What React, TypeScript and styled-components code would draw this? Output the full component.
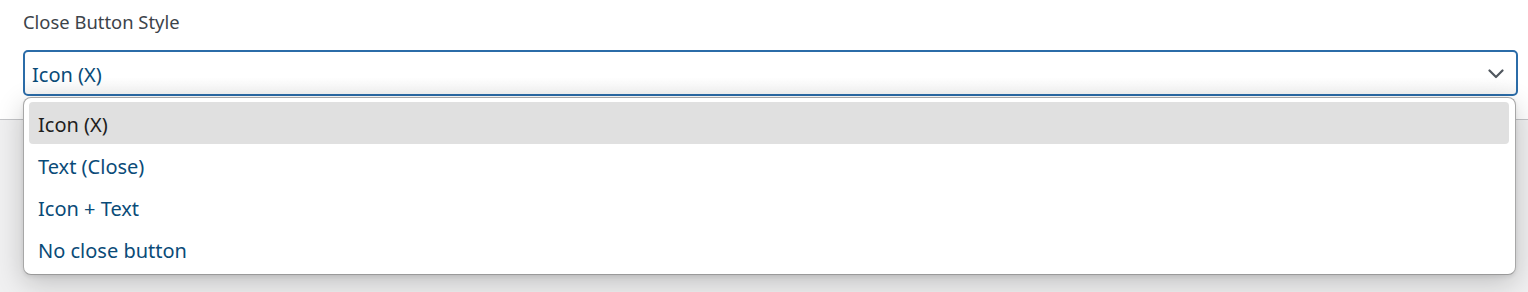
import React from "react";
import styled, { createGlobalStyle } from "styled-components";

const Global = createGlobalStyle`
  html, body { margin: 0; padding: 0; }
  body {
    background: #f0f0f1;
    font-family: "Noto Sans", "Open Sans", sans-serif;
    width: 1528px;
    height: 292px;
    overflow: hidden;
  }
`;

const Page = styled.div`
  position: relative;
  width: 1528px;
  height: 292px;
`;

const Panel = styled.div`
  background: #ffffff;
  border-bottom: 1px solid #c3c4c7;
  height: 120px;
  box-sizing: border-box;
  padding: 11px 10px 0 23px;
  display: flex;
  flex-direction: column;
  gap: 17px;
`;

const Label = styled.label`
  font-size: 18.4px;
  line-height: 22px;
  color: #3c434a;
`;

const SelectBox = styled.div`
  box-sizing: border-box;
  height: 46px;
  border: 2px solid #2b6ca8;
  border-radius: 5px;
  background: linear-gradient(#ffffff 60%, #f6f6f6);
  display: flex;
  align-items: center;
  justify-content: space-between;
  padding: 2px 12px 0 7px;
  font-size: 20px;
  color: #0a4b78;
`;

const Menu = styled.ul`
  position: absolute;
  left: 23px;
  top: 97px;
  width: 1493px;
  box-sizing: border-box;
  margin: 0;
  padding: 4px 6px 4px 5px;
  list-style: none;
  background: #ffffff;
  border: 1px solid #a7a7a7;
  border-bottom-color: #9a9a9a;
  border-radius: 8px;
  box-shadow: 0 8px 28px rgba(0, 0, 0, 0.2), 0 2px 4px rgba(0, 0, 0, 0.08);
`;

const Item = styled.li<{ $active?: boolean }>`
  height: 42px;
  box-sizing: border-box;
  padding: 2px 0 0 9px;
  display: flex;
  align-items: center;
  border-radius: 4px;
  font-size: 20px;
  background: ${(p) => (p.$active ? "#e0e0e0" : "transparent")};
  color: ${(p) => (p.$active ? "#1e1e1e" : "#0a4b78")};
`;

const Chevron = () => (
  <svg width="16" height="10" viewBox="0 0 16 10" fill="none">
    <path d="M1.5 1.5L8 8L14.5 1.5" stroke="#50575e" strokeWidth="2.2" strokeLinecap="round" strokeLinejoin="round" />
  </svg>
);

const options = ["Icon (X)", "Text (Close)", "Icon + Text", "No close button"];

export default function App() {
  return (
    <Page>
      <Global />
      <Panel>
        <Label>Close Button Style</Label>
        <SelectBox>
          <span>Icon (X)</span>
          <Chevron />
        </SelectBox>
      </Panel>
      <Menu>
        {options.map((o, i) => (
          <Item key={o} $active={i === 0}>
            {o}
          </Item>
        ))}
      </Menu>
    </Page>
  );
}
